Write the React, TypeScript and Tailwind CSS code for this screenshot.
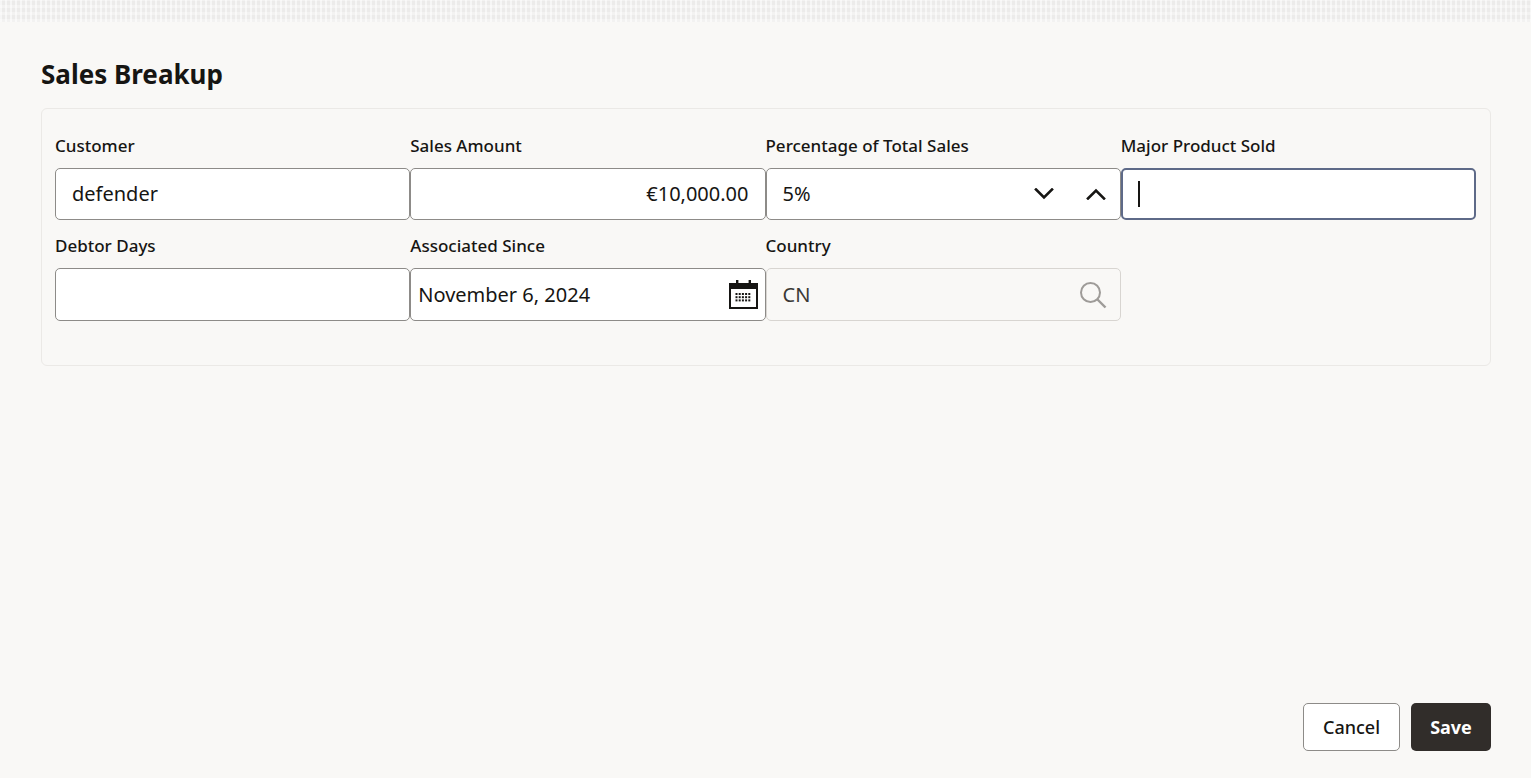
import React from 'react';

const font = { fontFamily: '"Noto Sans", "Open Sans", sans-serif' };

function CalendarIcon() {
  const dots: React.ReactElement[] = [];
  for (let r = 0; r < 3; r++) {
    for (let c = 0; c < 5; c++) {
      dots.push(<rect key={`${r}-${c}`} x={7.5 + c * 3.2} y={14 + r * 3.2} width="2" height="2" fill="#161513" />);
    }
  }
  return (
    <svg width="31" height="31" viewBox="0 0 31 31" fill="none">
      <rect x="2" y="5" width="27" height="24" stroke="#161513" strokeWidth="2" />
      <rect x="2" y="5" width="27" height="5" fill="#161513" />
      <rect x="8" y="1" width="2.4" height="7" fill="#161513" />
      <rect x="20.6" y="1" width="2.4" height="7" fill="#161513" />
      {dots}
    </svg>
  );
}

function Chevron({ up }: { up?: boolean }) {
  return (
    <svg width="20" height="12" viewBox="0 0 20 12" fill="none">
      <path
        d={up ? 'M2 10.5 L10 2.5 L18 10.5' : 'M2 1.5 L10 9.5 L18 1.5'}
        stroke="#161513"
        strokeWidth="2.6"
        strokeLinecap="square"
      />
    </svg>
  );
}

function SearchIcon() {
  return (
    <svg width="28" height="28" viewBox="0 0 28 28" fill="none">
      <circle cx="11.5" cy="11.5" r="9.5" stroke="#9e9b98" strokeWidth="2" />
      <path d="M18.5 18.5 L26.5 26.5" stroke="#9e9b98" strokeWidth="2.4" />
    </svg>
  );
}

function Label({ children }: { children: React.ReactNode }) {
  return <div className="mb-[10px] h-6 text-[17px] font-medium leading-6 text-[#161513]">{children}</div>;
}

export default function App() {
  return (
    <div className="flex h-screen flex-col bg-[#f9f8f6]" style={font}>
      {/* textured top band */}
      <div
        className="h-[22px] w-full"
        style={{
          backgroundColor: '#ecebea',
          backgroundImage:
            'repeating-linear-gradient(90deg, rgba(255,255,255,0.55) 0 2px, transparent 2px 5px), repeating-linear-gradient(0deg, rgba(255,255,255,0.35) 0 3px, transparent 3px 7px)',
        }}
      />

      <div className="pr-[40px] pl-[41px]">
        <h1 className="mt-9 mb-[18px] h-8 text-[26px] font-bold leading-8 text-[#161513]">Sales Breakup</h1>

        <div className="rounded-md border border-[#ebe9e6] bg-[#f9f8f6] pt-[25px] pr-[14px] pb-[44px] pl-[13px]">
          <div className="grid grid-cols-4 gap-y-[14px]">
            <div>
              <Label>Customer</Label>
              <div className="flex h-[52px] items-center rounded-[5px] border border-[#8d8b88] bg-white pl-[16px] text-[20px] text-[#161513]">
                defender
              </div>
            </div>
            <div>
              <Label>Sales Amount</Label>
              <div className="flex h-[52px] items-center justify-end rounded-[5px] border border-[#8d8b88] bg-white pr-[16px] text-[20px] text-[#161513]">
                €10,000.00
              </div>
            </div>
            <div>
              <Label>Percentage of Total Sales</Label>
              <div className="flex h-[52px] items-center rounded-[5px] border border-[#8d8b88] bg-white pr-[14px] pl-[16px] text-[20px] text-[#161513]">
                <span className="flex-1">5%</span>
                <span className="mr-[32px] flex items-center">
                  <Chevron />
                </span>
                <span className="flex items-center">
                  <Chevron up />
                </span>
              </div>
            </div>
            <div>
              <Label>Major Product Sold</Label>
              <div className="flex h-[52px] items-center rounded-[5px] border-2 border-[#5e6a88] bg-white pl-[15px]">
                <span className="h-[26px] w-[2px] bg-[#161513]" />
              </div>
            </div>

            <div>
              <Label>Debtor Days</Label>
              <div className="h-[53px] rounded-[5px] border border-[#8d8b88] bg-white" />
            </div>
            <div>
              <Label>Associated Since</Label>
              <div className="flex h-[53px] items-center rounded-[5px] border border-[#8d8b88] bg-white pr-[6px] pl-[7px] text-[20px] text-[#161513]">
                <span className="flex-1">November 6, 2024</span>
                <CalendarIcon />
              </div>
            </div>
            <div>
              <Label>Country</Label>
              <div className="flex h-[53px] items-center rounded-[5px] border border-[#d8d5d1] bg-[#f9f8f6] pr-[13px] pl-[16px] text-[20px] text-[#3b3936]">
                <span className="flex-1">CN</span>
                <SearchIcon />
              </div>
            </div>
          </div>
        </div>
      </div>

      <div className="flex-1" />

      <div className="flex justify-end gap-[11px] pr-[40px] pb-[27px]">
        <button className="h-12 w-[97px] rounded-[5px] border border-[#8d8b88] bg-white text-[18px] font-medium text-[#161513]">
          Cancel
        </button>
        <button className="h-12 w-[80px] rounded-[5px] bg-[#312d2a] text-[18px] font-bold text-white">Save</button>
      </div>
    </div>
  );
}
